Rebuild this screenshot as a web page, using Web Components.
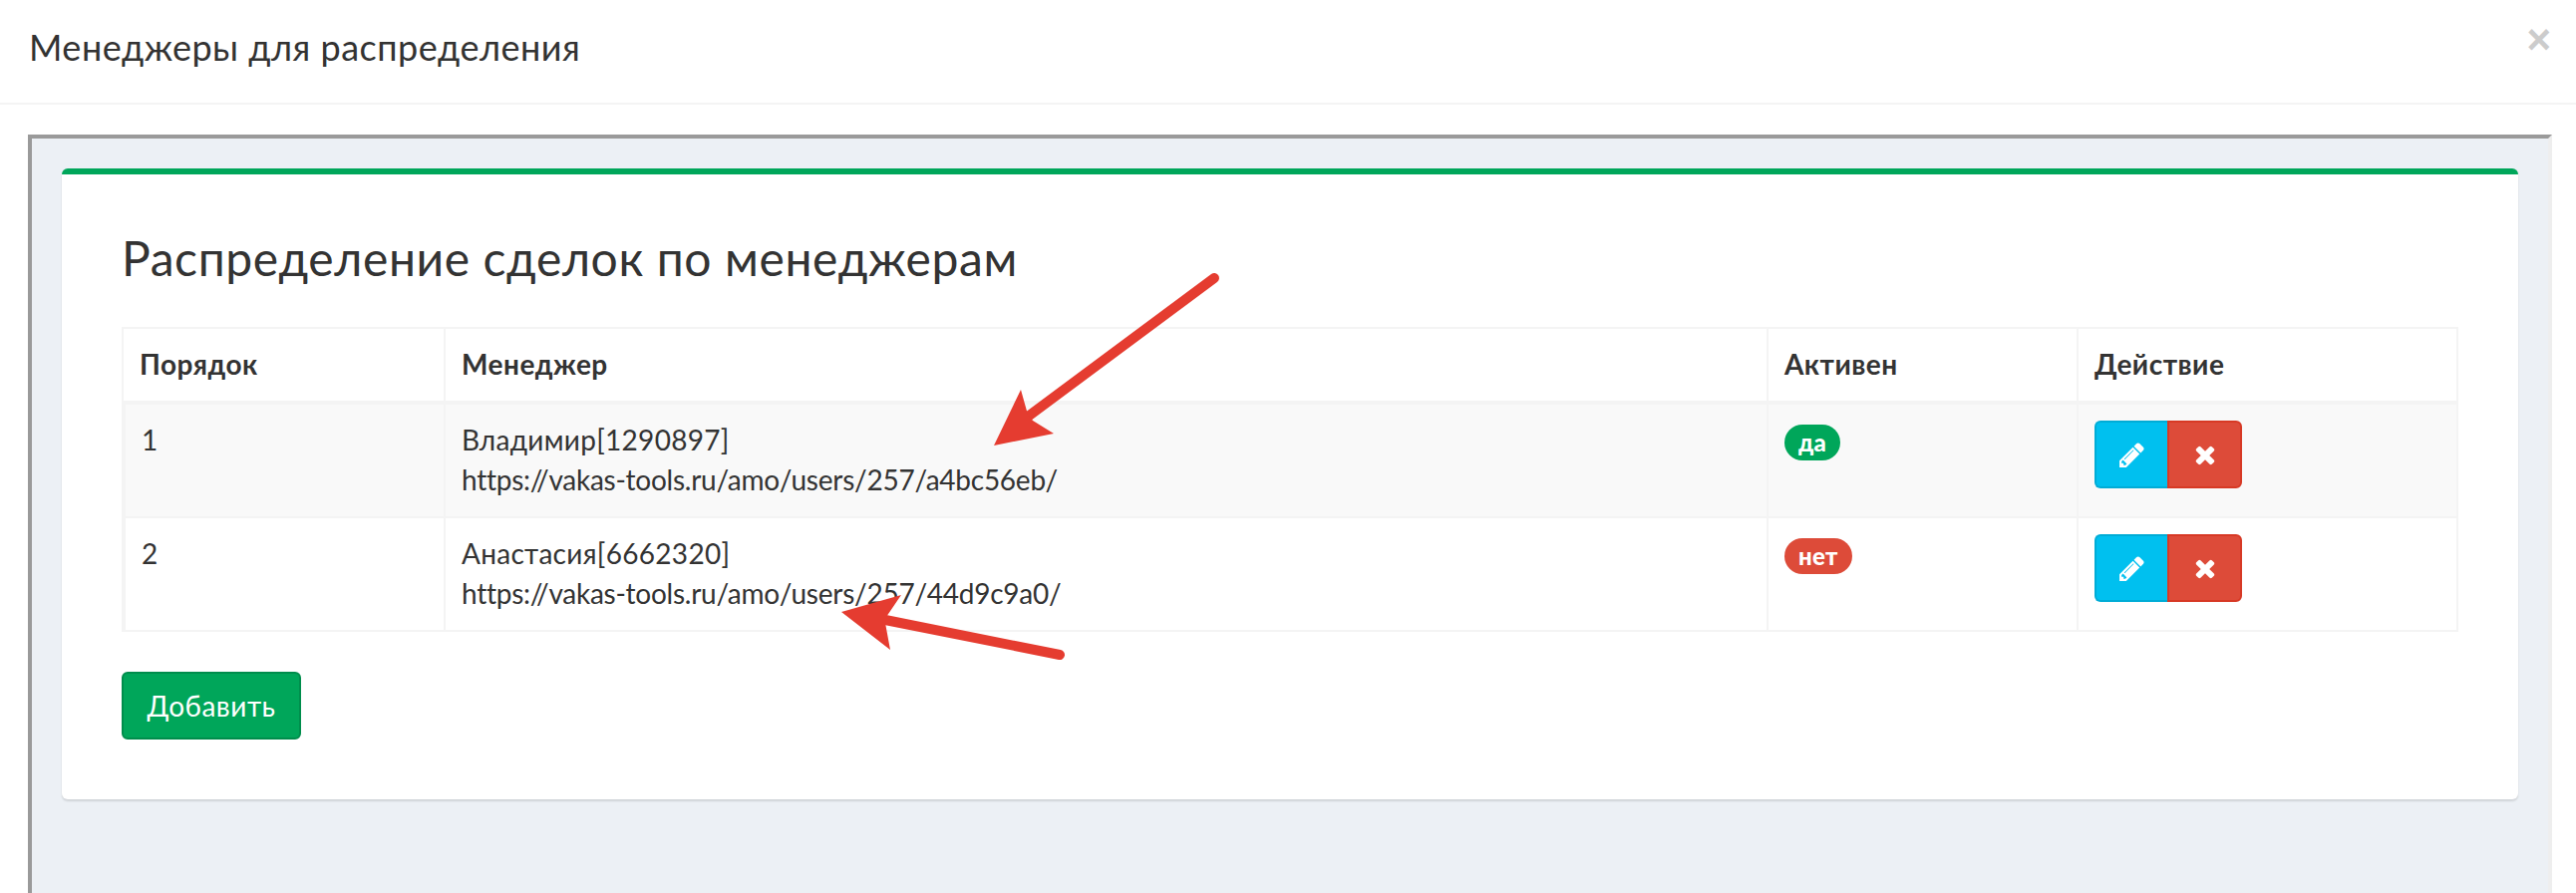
<!DOCTYPE html>
<html lang="ru"><head><meta charset="utf-8"><title>Менеджеры для распределения</title>
<style>
html,body{margin:0;height:896px;overflow:hidden;background:#fff}
body{font-family:Lato,"Noto Sans",sans-serif;color:#333}
</style></head><body>
<manager-modal heading="Менеджеры для распределения">
  <manager-frame>
    <manager-card heading="Распределение сделок по менеджерам">
      <manager-table>
        <manager-row order="1" name="Владимир[1290897]" url="https://vakas-tools.ru/amo/users/257/a4bc56eb/" active="да" tone="yes"></manager-row>
        <manager-row order="2" name="Анастасия[6662320]" url="https://vakas-tools.ru/amo/users/257/44d9c9a0/" active="нет" tone="no"></manager-row>
      </manager-table>
      <add-button>Добавить</add-button>
    </manager-card>
  </manager-frame>
  <annotation-arrows></annotation-arrows>
</manager-modal>
<script>
function def(name, css, html){
  customElements.define(name, class extends HTMLElement{
    connectedCallback(){
      if(this.shadowRoot) return;
      const r=this.attachShadow({mode:'open'});
      const a=n=>this.getAttribute(n)||'';
      r.innerHTML='<style>'+css+'</style>'+html(a);
    }
  });
}
def('manager-modal',`
  :host{display:block;position:relative;height:896px;overflow:hidden}
  header{display:flex;justify-content:space-between;align-items:flex-start;height:103px;box-sizing:border-box;padding:26px 25px 0 29px}
  h4{margin:0;font:400 36px/1.2 Lato,"Noto Sans",sans-serif;letter-spacing:.5px;color:#333}
  .x{font:700 42px/42px "Liberation Sans",sans-serif;color:#ccc;margin-top:-7px}
  hr{margin:0;border:0;height:2px;background:#f4f4f4}
  main{padding:30px 24px 0 28px}
`,a=>`<header><h4>${a('heading')}</h4><span class="x">×</span></header><hr><main><slot></slot></main>`);

def('manager-frame',`
  :host{display:block;box-sizing:border-box;height:900px;border:4px solid;border-color:#9a9a9a #eee #eee #9a9a9a;background:#ecf0f5;padding:30px 30px 0 30px}
`,()=>`<slot></slot>`);

def('manager-card',`
  :host{display:block;box-sizing:border-box;height:633px;background:#fff;border-top:6px solid #00a65a;border-radius:6px;box-shadow:0 2px 2px rgba(0,0,0,.12);padding:0 60px}
  h3{margin:0;height:153px;box-sizing:border-box;padding-top:55px;font:400 48px/1.2 Lato,"Noto Sans",sans-serif;letter-spacing:.6px;color:#333}
`,a=>`<h3>${a('heading')}</h3><slot></slot>`);

def('manager-table',`
  :host{display:block;border:2px solid #f4f4f4;font:400 28px/40px Lato,"Noto Sans",sans-serif;color:#333;margin-bottom:40px}
  .h{display:grid;grid-template-columns:321px 1327px 311px 1fr;border-bottom:4px solid #f4f4f4;font-weight:700;height:72px;letter-spacing:.5px}
  .h div{padding:15px 16px 17px;border-left:2px solid #f4f4f4;box-sizing:border-box}
  .h div:first-child{border-left:0}
  ::slotted(manager-row:nth-of-type(1)){background:#f9f9f9;border-bottom:2px solid #f4f4f4}
`,()=>`<div class="h"><div>Порядок</div><div>Менеджер</div><div>Активен</div><div>Действие</div></div><slot></slot>`);

def('manager-row',`
  :host{display:grid;grid-template-columns:321px 1327px 311px 1fr;height:112px}
  .c{padding:15px 16px 17px;border-left:2px solid #f4f4f4;box-sizing:border-box}
  .c:first-child{border-left:0;padding-left:15px}
  .n{letter-spacing:.3px}
  .u{letter-spacing:-.25px}
`,a=>`<div class="c">${a('order')}</div><div class="c"><span class="n">${a('name')}</span><br><span class="u">${a('url')}</span></div><div class="c"><status-label tone="${a('tone')}">${a('active')}</status-label></div><div class="c"><action-buttons></action-buttons></div>`);

customElements.define('status-label',class extends HTMLElement{
  connectedCallback(){ if(this.shadowRoot) return;
    const no=this.getAttribute('tone')==='no';
    this.attachShadow({mode:'open'}).innerHTML=`<style>
    :host{display:inline-block;vertical-align:top;margin-top:5px;height:36px;padding:0 14px;border-radius:18px;background:${no?'#dd4b39':'#00a65a'};color:#fff;font:900 24px/35px Lato,"Noto Sans",sans-serif;letter-spacing:.2px}
    </style><slot></slot>`;
  }
});

def('action-buttons',`
  :host{display:flex;width:148px;height:68px;margin-top:1px}
  b{flex:1;display:flex;align-items:center;justify-content:center;box-sizing:border-box;border:2px solid}
  .e{background:#00c0ef;border-color:#00acd6;border-right:0;border-radius:6px 0 0 6px}
  .d{background:#dd4b39;border-color:#d73925;border-radius:0 6px 6px 0}
  svg{fill:#fff;display:block}
`,()=>`<b class="e"><svg width="29" height="29" viewBox="0 0 1792 1792"><path d="M491 1536l91-91-235-235-91 91v107h128v128h107zm523-928q0-22-22-22-10 0-17 7l-542 542q-7 7-7 17 0 22 22 22 10 0 17-7l542-542q7-7 7-17zm-54-192l416 416-832 832h-416v-416zm683 96q0 53-37 90l-166 166-416-416 166-165q36-38 90-38 53 0 91 38l235 234q37 39 37 91z"/></svg></b><b class="d"><svg width="28" height="28" viewBox="0 0 1792 1792"><path d="M1490 1322q0 40-28 68l-136 136q-28 28-68 28t-68-28l-294-294-294 294q-28 28-68 28t-68-28l-136-136q-28-28-28-68t28-68l294-294-294-294q-28-28-28-68t28-68l136-136q28-28 68-28t68 28l294 294 294-294q28-28 68-28t68 28l136 136q28 28 28 68t-28 68l-294 294 294 294q28 28 28 68z"/></svg></b>`);

def('add-button',`
  :host{display:inline-block;box-sizing:border-box;width:180px;height:68px;background:#00a65a;border:2px solid #008d4c;border-radius:6px;color:#fff;font:400 28px/64px Lato,"Noto Sans",sans-serif;letter-spacing:.5px;text-align:center}
`,()=>`<slot></slot>`);

def('annotation-arrows',`
  :host{position:absolute;left:0;top:0;width:2584px;height:896px;pointer-events:none}
  svg{display:block}
`,()=>`<svg width="2584" height="896" viewBox="0 0 2584 896">
  <line x1="1218" y1="279" x2="1031" y2="418" stroke="#e53c30" stroke-width="10" stroke-linecap="round"/>
  <polygon points="997,447 1024,391 1031,416 1036,422 1057,435" fill="#e53c30"/>
  <line x1="1063" y1="657" x2="888" y2="622" stroke="#e53c30" stroke-width="10" stroke-linecap="round"/>
  <polygon points="844,614 904,597 889,619 888,625 893,652" fill="#e53c30"/>
</svg>`);
</script>
</body></html>
